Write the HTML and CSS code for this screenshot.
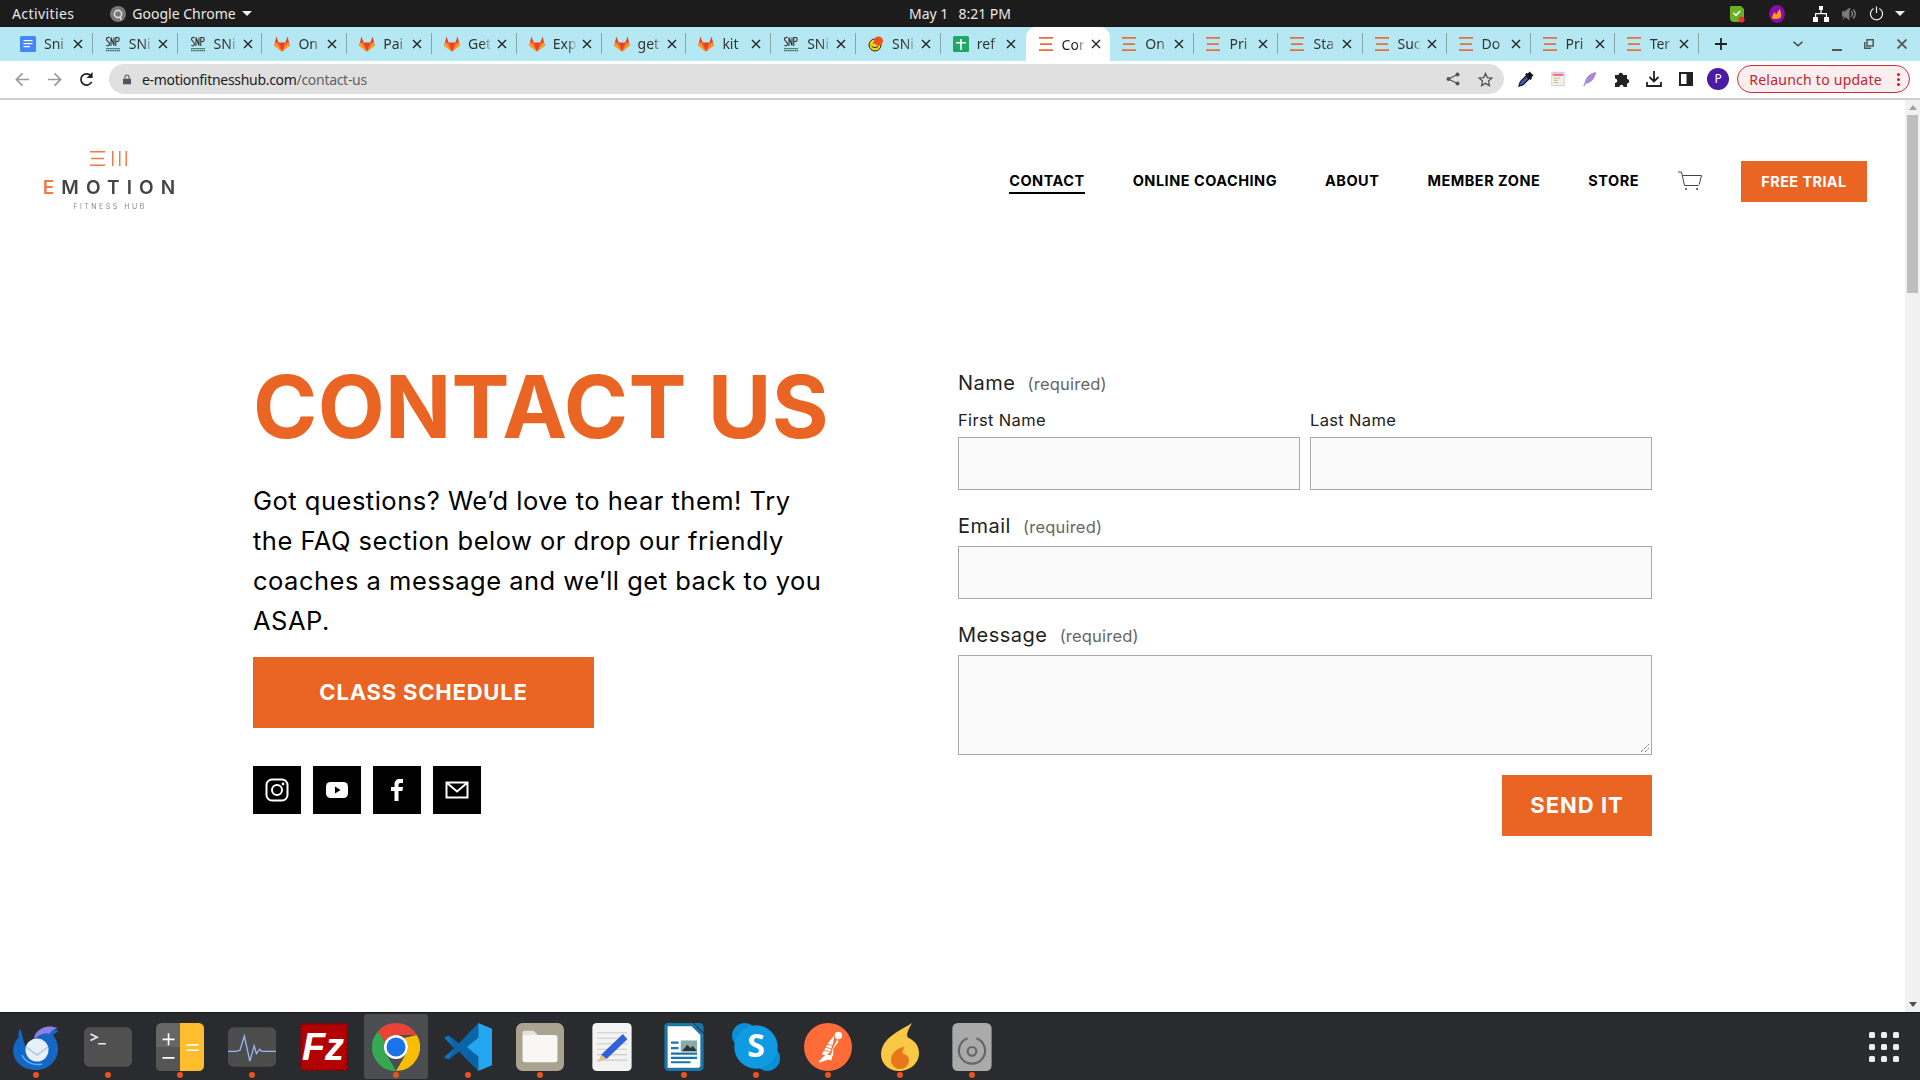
FILE: index.html
```html
<!DOCTYPE html>
<html lang="en">
<head>
<meta charset="utf-8">
<title>Contact Us</title>
<link rel="stylesheet" href="styles.css">
</head>
<body>
<svg class="defs" width="0" height="0">
  <symbol id="gl" viewBox="1 1 14 14.500"><path fill="#e24329" d="M8 15 1 9.600 2.900 1.500 5 7h6l2.100-5.500L15 9.600z"/><path fill="#fc6d26" d="M8 15 5 7H2.200L1 9.600zM8 15l3-8h2.800L15 9.600z"/><path fill="#fca326" d="M8 15 2.200 7 1 9.600zM8 15l5.800-8L15 9.600z"/></symbol>
  <symbol id="snp" viewBox="0 0 16 16"><path fill="none" stroke="#333" stroke-width="1.100" d="M4.600 1.500C2.500 1 1.500 2 1.500 3.200c0 2 3 2.500 3 4.800 0 1.500-1.500 2-3.200 1.500M6 10V1.500l3 8V1.500M10.800 10V1.500h2c1.800 0 1.800 4-.2 4h-1.800"/><path stroke="#3a8f85" stroke-width="1" d="M1 12.500h14"/><path stroke="#555" stroke-width="1.400" stroke-dasharray="1.500 .6" d="M1 14.500h14"/></symbol>
  <symbol id="bars" viewBox="0 0 16 16"><path fill="#ea6e3c" d="M1 1h14v1.800H1zM2 7.200h12V9H2zM1 13.300h14v1.800H1z"/></symbol>
  <symbol id="close" viewBox="0 0 10 10"><path stroke="#222" stroke-width="1.400" d="m1 1 8 8M9 1 1 9"/></symbol>
  <symbol id="docs" viewBox="0 0 16 16"><rect x="0" y="0" width="16" height="16" rx="1.500" fill="#4285f4"/><path fill="#fff" d="M3.500 4h9v1.300h-9zM3.500 7h9v1.300h-9zM3.500 10h6.500v1.300H3.500z"/></symbol>
  <symbol id="sheet" viewBox="0 0 16 16"><rect width="16" height="16" rx="1.500" fill="#23a566"/><path fill="#fff" d="M7.200 3h1.600v3H13v1.500H8.800V14H7.200V7.500H3V6h4.200z"/></symbol>
  <symbol id="smiley" viewBox="0 0 16 16"><circle cx="7" cy="9" r="6" fill="#f4d21f" stroke="#222" stroke-width="1"/><path fill="none" stroke="#222" d="M3.500 10c2 2 5 2 7 0M5 7.500l2-1.500"/><circle cx="10.500" cy="5" r="4.500" fill="#f2511b"/></symbol>
</svg>

<header class="topbar">
  <div class="tb-left">
    <span class="tb-text">Activities</span>
    <span class="tb-app">
      <svg class="i16" viewBox="0 0 16 16"><circle cx="8" cy="8" r="8" fill="#777"/><circle cx="8" cy="8" r="3.600" fill="none" stroke="#ddd" stroke-width="1.600"/><path stroke="#ddd" stroke-width="1.500" d="m10 11 1.500 3"/></svg>
      Google Chrome
      <i class="caret"></i>
    </span>
  </div>
  <div class="tb-clock"><span>May 1</span><span>8:21 PM</span></div>
  <div class="tb-right">
    <svg class="tray-green" viewBox="0 0 16 18"><path fill="#6ab023" d="M2 1h10l3 3v9c0 3-3 4-5 4H5c-2 0-4-1-4-4V2z"/><path fill="none" stroke="#fff" stroke-width="1.500" d="m4.500 8 2.500 2.500L11 6"/><circle cx="12.500" cy="14.500" r="3" fill="#e33"/></svg>
    <svg class="tray-purple" viewBox="0 0 16 18"><ellipse cx="8" cy="9" rx="8" ry="9" fill="#8a0ea5"/><path fill="#ff9a26" d="M3 13c0-3 2-3 2-6 1 1 2 1 2 3 1-2 2-4 4-6 0 3 2 5 1 8-1 2-8 3-9 1z"/></svg>
    <svg class="tray-net" viewBox="0 0 16 16"><path fill="#fff" d="M6 0h4v4H6zM0 11h5v5H0zM11 11h5v5h-5zM7.400 4h1.200v3H14v4h-1.200V8.200H3.200V11H2V7h5.400z"/></svg>
    <svg class="tray-vol" viewBox="0 0 16 16"><path fill="#777" d="M0 5h3l5-4v14l-5-4H0z"/><path fill="none" stroke="#999" stroke-width="1.200" d="M10 5c1.500 2 1.500 4 0 6M12 3c2.500 3 2.500 7 0 10"/><path stroke="#888" d="M1 14 9 2"/></svg>
    <svg class="tray-pow" viewBox="0 0 16 16"><path fill="none" stroke="#eee" stroke-width="1.300" d="M5 2.600a6.500 6.500 0 1 0 6 0M8 .5v7"/></svg>
    <i class="caret"></i>
  </div>
</header>

<nav class="tabstrip">
  <div class="tabs">
    <div class="tab"><svg class="fav"><use href="#docs"/></svg><span class="t">Sni</span><svg class="x"><use href="#close"/></svg></div>
    <div class="tab"><svg class="fav"><use href="#snp"/></svg><span class="t">SNi</span><svg class="x"><use href="#close"/></svg></div>
    <div class="tab"><svg class="fav"><use href="#snp"/></svg><span class="t">SNi</span><svg class="x"><use href="#close"/></svg></div>
    <div class="tab"><svg class="fav"><use href="#gl"/></svg><span class="t">On</span><svg class="x"><use href="#close"/></svg></div>
    <div class="tab"><svg class="fav"><use href="#gl"/></svg><span class="t">Pai</span><svg class="x"><use href="#close"/></svg></div>
    <div class="tab"><svg class="fav"><use href="#gl"/></svg><span class="t">Get</span><svg class="x"><use href="#close"/></svg></div>
    <div class="tab"><svg class="fav"><use href="#gl"/></svg><span class="t">Exp</span><svg class="x"><use href="#close"/></svg></div>
    <div class="tab"><svg class="fav"><use href="#gl"/></svg><span class="t">get</span><svg class="x"><use href="#close"/></svg></div>
    <div class="tab"><svg class="fav"><use href="#gl"/></svg><span class="t">kit</span><svg class="x"><use href="#close"/></svg></div>
    <div class="tab"><svg class="fav"><use href="#snp"/></svg><span class="t">SNi</span><svg class="x"><use href="#close"/></svg></div>
    <div class="tab"><svg class="fav"><use href="#smiley"/></svg><span class="t">SNi</span><svg class="x"><use href="#close"/></svg></div>
    <div class="tab before-active"><svg class="fav"><use href="#sheet"/></svg><span class="t">ref</span><svg class="x"><use href="#close"/></svg></div>
    <div class="tab active"><svg class="fav"><use href="#bars"/></svg><span class="t">Cor</span><svg class="x"><use href="#close"/></svg></div>
    <div class="tab"><svg class="fav"><use href="#bars"/></svg><span class="t">On</span><svg class="x"><use href="#close"/></svg></div>
    <div class="tab"><svg class="fav"><use href="#bars"/></svg><span class="t">Pri</span><svg class="x"><use href="#close"/></svg></div>
    <div class="tab"><svg class="fav"><use href="#bars"/></svg><span class="t">Sta</span><svg class="x"><use href="#close"/></svg></div>
    <div class="tab"><svg class="fav"><use href="#bars"/></svg><span class="t">Suc</span><svg class="x"><use href="#close"/></svg></div>
    <div class="tab"><svg class="fav"><use href="#bars"/></svg><span class="t">Do</span><svg class="x"><use href="#close"/></svg></div>
    <div class="tab"><svg class="fav"><use href="#bars"/></svg><span class="t">Pri</span><svg class="x"><use href="#close"/></svg></div>
    <div class="tab"><svg class="fav"><use href="#bars"/></svg><span class="t">Ter</span><svg class="x"><use href="#close"/></svg></div>
  </div>
  <svg class="newtab" viewBox="0 0 12 12"><path fill="#222" d="M5.100 0h1.800v5.100H12v1.800H6.900V12H5.100V6.900H0V5.100h5.100z"/></svg>
  <div class="winctl">
    <svg class="chev" viewBox="0 0 10 6"><path fill="none" stroke="#444" stroke-width="1.500" d="m.5.800 4.500 4 4.500-4"/></svg>
    <svg class="wmin" viewBox="0 0 10 10"><path fill="#555" d="M0 8h10v2H0z"/></svg>
    <svg class="wres" viewBox="0 0 10 10"><path fill="none" stroke="#555" stroke-width="1.500" d="M3 .8h6.200V7H3zM.8 3v6.200H7"/></svg>
    <svg class="wcls" viewBox="0 0 10 10"><path stroke="#555" stroke-width="1.800" d="m.5.500 9 9M9.500.500l-9 9"/></svg>
  </div>
</nav>

<div class="toolbar">
  <svg class="nav-a" viewBox="0 0 16 16"><path fill="none" stroke="#9a9a9a" stroke-width="1.800" d="M15 8H2m6-6.500L1.500 8 8 14.500"/></svg>
  <svg class="nav-b" viewBox="0 0 16 16"><path fill="none" stroke="#9a9a9a" stroke-width="1.800" d="M1 8h13M8 1.500 14.500 8 8 14.500"/></svg>
  <svg class="nav-c" viewBox="0 0 16 16"><path fill="none" stroke="#222" stroke-width="1.800" d="M13.500 10.500A6 6 0 1 1 13 4.500"/><path fill="#222" d="M14.500 0v6.500H8z"/></svg>
  <div class="omnibox">
    <svg class="lock" viewBox="0 0 10 12"><path fill="#555" d="M0 5h10v7H0z"/><path fill="none" stroke="#555" stroke-width="1.300" d="M2.500 5V3a2.500 2.500 0 0 1 5 0v2"/></svg>
    <span class="url">e-motionfitnesshub.com<span class="url-path">/contact-us</span></span>
    <svg class="share" viewBox="0 0 14 14"><circle cx="11.500" cy="2.500" r="2" fill="#555"/><circle cx="2.500" cy="7" r="2" fill="#555"/><circle cx="11.500" cy="11.500" r="2" fill="#555"/><path stroke="#555" stroke-width="1.200" fill="none" d="M11.500 2.500 2.500 7l9 4.500"/></svg>
    <svg class="star" viewBox="0 0 16 16"><path fill="none" stroke="#555" stroke-width="1.400" d="m8 1.500 2 4.500 4.800.5-3.600 3.200 1 4.800L8 12.100 3.800 14.500l1-4.800L1.200 6.500 6 6z"/></svg>
  </div>
  <div class="ext">
    <svg viewBox="0 0 18 18"><path fill="#111" d="m11 3 2-2.500 4.500 4.500L15 7l1 1-2 2-6-6 2-2z"/><path fill="#3b55b5" stroke="#111" stroke-width="1.200" d="M9 5.500 2.500 12 1 17l5-1.500L12.500 9z"/></svg>
    <svg viewBox="0 0 18 18"><rect x="2" y="1.500" width="14" height="15" fill="#f3f1ea" stroke="#ccc"/><path fill="#f27" d="M3 3h12v2.500H3z" opacity=".7"/><path stroke="#9c6" d="M4.500 8h7M4.500 10.500h4"/><path stroke="#e9a" d="M4.500 13h5"/></svg>
    <svg viewBox="0 0 18 18"><path fill="#a88bd4" d="M16 1C9 2 4 7 3 13l-1.500 4 1 .5L4 14.500C11 13 15 8 16 1z"/></svg>
    <svg viewBox="0 0 16 16"><path fill="#222" d="M1 4h3.500C4.500 1 9 1 9 4h4v4c3 0 3 4.500 0 4.500V16H9.500c0-3-4-3-4 0H1v-4c3 0 3-4.500 0-4.500z"/></svg>
    <svg viewBox="0 0 16 16"><path fill="none" stroke="#222" stroke-width="1.800" d="M8 0v10M3.500 6 8 10.500 12.500 6M1 11v4h14v-4"/></svg>
    <svg viewBox="0 0 16 16"><path fill="#222" d="M1 1h14v14H1z"/><path fill="#fff" d="M3 3h5.500v10H3z"/></svg>
    <span class="avatar">P</span>
  </div>
  <div class="relaunch"><span>Relaunch to update</span><i class="dots"></i></div>
</div>

<div class="viewport">
  <main class="page">
    <div class="site-head">
      <div class="logo">
        <svg class="logo-mark" viewBox="0 0 37 15"><path fill="#ef7b47" d="M0 0h15v1.500H0zM1 6.800h13v1.500H1zM0 13.500h15V15H0zM22 0h1.500v15H22zM29 0h1.500v15H29zM35.500 0H37v15h-1.500z"/></svg>
        <div class="logo-name"><b>E</b>MOTION</div>
        <div class="logo-sub">FITNESS HUB</div>
      </div>
      <div class="site-nav">
        <a class="link current">CONTACT</a>
        <a class="link">ONLINE COACHING</a>
        <a class="link">ABOUT</a>
        <a class="link">MEMBER ZONE</a>
        <a class="link">STORE</a>
        <svg class="cart" viewBox="0 0 26 20"><path fill="none" stroke="#444" d="M1 1h3.500l3 13.500h14M5.500 4.500h19l-2.300 9"/><circle cx="9" cy="18" r="1" fill="#444"/><circle cx="20" cy="18" r="1" fill="#444"/></svg>
        <a class="btn-trial">FREE TRIAL</a>
      </div>
    </div>
    <div class="content">
      <section class="intro">
        <h1>CONTACT US</h1>
        <p>Got questions? We’d love to hear them! Try the FAQ section below or drop our friendly coaches a message and we’ll get back to you ASAP.</p>
        <a class="btn-schedule">CLASS SCHEDULE</a>
        <div class="socials">
          <a class="social"><svg viewBox="0 0 24 24"><rect x="1.500" y="1.500" width="21" height="21" rx="5.500" fill="none" stroke="#fff" stroke-width="2"/><circle cx="12" cy="12" r="5" fill="none" stroke="#fff" stroke-width="2"/><circle cx="18" cy="6" r="1.400" fill="#fff"/></svg></a>
          <a class="social"><svg viewBox="0 0 24 24"><rect x="1" y="4" width="22" height="16" rx="4.500" fill="#fff"/><path d="m10 8.500 5.500 3.500-5.500 3.500z" fill="#000"/></svg></a>
          <a class="social"><svg viewBox="0 0 24 24"><path fill="#fff" d="M9.500 23V13H6V9h3.500V6.500C9.500 3 11.500 1 14.500 1H18v4h-2.500c-1.300 0-2 .7-2 2v2H18l-.6 4h-3.900v10z"/></svg></a>
          <a class="social"><svg viewBox="0 0 24 24"><path fill="none" stroke="#fff" stroke-width="2" d="M1.500 4.500h21v15h-21zM2 5l10 8.500L22 5"/></svg></a>
        </div>
      </section>
      <form class="contact-form">
        <div class="legend">Name <small>(required)</small></div>
        <div class="name-row">
          <label class="sub">First Name<span class="input"></span></label>
          <label class="sub">Last Name<span class="input"></span></label>
        </div>
        <div class="legend">Email <small>(required)</small></div>
        <span class="input"></span>
        <div class="legend">Message <small>(required)</small></div>
        <span class="input area">
          <svg class="grip" viewBox="0 0 8 8"><path stroke="#444" stroke-dasharray="1 1" d="M0 8 8 0M4 8l4-4"/></svg>
        </span>
        <div class="send-row"><a class="btn-send">SEND IT</a></div>
      </form>
    </div>
  </main>
  <aside class="scrollbar">
    <i class="arrow up"></i>
    <i class="thumb"></i>
    <i class="arrow down"></i>
  </aside>
</div>

<footer class="dock">
  <div class="slot run"><svg class="ico" viewBox="0 0 48 48"><path fill="#1467c4" d="M8 6c-2 3-2 6-1 8-5 5-7 12-5 19 3 9 12 14 22 14 12 0 22-9 22-21 0-6-2-10-5-14 2-2 4-3 6-4-7-3-14-3-19 0-3 2-5 5-5 8-5 1-8 4-9 8-3-5-3-12-6-18z"/><path fill="#8d7ee8" d="M22 16c0-6 6-11 12-12 4-1 8 0 12 1-4 1-7 3-9 6-3-2-9 0-15 5z"/><circle cx="25" cy="27" r="11.500" fill="#e6f0fa"/><path fill="none" stroke="#a9c7e6" stroke-width="1.500" d="m14 24 11 8 11-8"/><path fill="none" stroke="#5db0f2" stroke-width="1.500" d="M10 32c3 7 12 11 20 9"/></svg></div>
  <div class="slot run"><svg class="ico" viewBox="0 0 44 36"><rect width="44" height="36" rx="5" fill="#505050"/><path fill="none" stroke="#eee" stroke-width="1.500" d="m6 6 6 3-6 3M13 15h7"/></svg></div>
  <div class="slot run"><svg class="ico" viewBox="0 0 44 44"><rect width="44" height="44" rx="5" fill="#666"/><path fill="#555" d="M0 22h22v22H5a5 5 0 0 1-5-5z"/><path fill="#fdbd2c" d="M22 0h17a5 5 0 0 1 5 5v34a5 5 0 0 1-5 5H22z"/><path stroke="#fff" stroke-width="1.500" d="M6 15h11M11.500 9.500v11M6 32h11M28 20h11M28 25h11"/></svg></div>
  <div class="slot run"><svg class="ico" viewBox="0 0 44 36"><rect width="44" height="36" rx="5" fill="#4c4c4c"/><path fill="none" stroke="#9ab8f0" stroke-width="1.200" d="M0 22h7l4-1 4-13 5 23 4-14 2 7 3-4 2 2h13"/></svg></div>
  <div class="slot"><svg class="ico" viewBox="0 0 48 48"><rect x="1" y="1" width="46" height="46" fill="#b30000" stroke="#8a0000" stroke-width="2" stroke-dasharray="3 2"/><text class="fz" x="23" y="37" text-anchor="middle">Fz</text></svg></div>
  <div class="slot run on"><svg class="ico" viewBox="0 0 48 48"><path fill="#ea4335" d="M24 0a24 24 0 0 1 20.800 12H24a12 12 0 0 0-11 7L5.800 8.400A24 24 0 0 1 24 0z"/><path fill="#34a853" d="M3.200 12 14 31l10 17A24 24 0 0 1 3.200 12z"/><path fill="#fbbc04" d="M44.800 12A24 24 0 0 1 24 48l10.500-18A12 12 0 0 0 32 15z"/><path fill="#34a853" d="M5.800 8.400 13 19c-2 6 1 11 1 12L24 48A24 24 0 0 1 5.800 8.400z"/><circle cx="24" cy="24" r="12" fill="#fff"/><circle cx="24" cy="24" r="9.500" fill="#1a73e8"/></svg></div>
  <div class="slot run"><svg class="ico" viewBox="0 0 42 42"><path fill="#0e75bd" d="M0 13 4 11l9 7-4 4zM9 22l4 3-9 7-4-2z"/><path fill="#0a64a8" d="M30 0 13 18l-9-7 5 11-5 10 9-7 17 17z"/><path fill="#22a6f0" d="M30 0l12 5v32l-12 5V29l-10-8 10-8z"/></svg></div>
  <div class="slot run"><svg class="ico" viewBox="0 0 44 44"><rect width="44" height="44" rx="6" fill="#a9a390"/><path fill="#e6e3dc" d="M6 13V9a2 2 0 0 1 2-2h8l4 4z"/><rect x="6" y="11" width="32" height="25" rx="2" fill="#f8f7f4"/></svg></div>
  <div class="slot"><svg class="ico" viewBox="0 0 36 44"><rect width="36" height="44" rx="4" fill="#f3f3f3"/><path stroke="#ccc" d="M4 9h28M4 14h28M4 19h28M4 24h28M4 29h28M4 34h28"/><path fill="#2f62d8" d="M28 10l4 5L13 33l-5-4z"/><path fill="#e3c38a" d="m8 29 5 4-8 3z"/></svg></div>
  <div class="slot run"><svg class="ico" viewBox="0 0 36 44"><path fill="#1a75a8" d="M2 0h24l10 10v30a4 4 0 0 1-4 4H4a4 4 0 0 1-4-4V2z"/><path fill="#fff" d="M3 3h22l8 8v28a2 2 0 0 1-2 2H3z"/><path fill="#1a75a8" d="M6 17h7v2H6zM6 22h7v2H6zM6 27h24v2H6zM6 31h24v2H6zM6 35h18v2H6z"/><rect x="15" y="16" width="15" height="10" fill="#8aa"/><path fill="#333" d="m16 26 5-6 3 3 2-2 4 5z"/><path fill="#1a75a8" d="M27 0h5a4 4 0 0 1 4 4v5z"/></svg></div>
  <div class="slot run"><svg class="ico" viewBox="0 0 42 42"><circle cx="11" cy="11" r="11" fill="#0a8ed6"/><circle cx="31" cy="31" r="11" fill="#0a8ed6"/><circle cx="21" cy="21" r="19" fill="#0f9ae2"/><text class="skype-s" x="21" y="30" text-anchor="middle">S</text></svg></div>
  <div class="slot run"><svg class="ico" viewBox="0 0 46 46"><circle cx="23" cy="23" r="23" fill="#ff6c37"/><circle cx="33" cy="12" r="3.500" fill="#fff"/><path fill="#fff" d="M30 11l3 3-5 9-2 7-1 1-4-1-7 7 1 1 8-3 3 1 1-4 1-1 0-6 5-7-2-4z"/><path fill="#fff" d="M24 18l5-6-1 7-3 9-4 3-4-1 3-5z"/><path stroke="#ff6c37" stroke-width=".8" d="M21 20l8 2M20 23l7 2M19 26l7 2"/></svg></div>
  <div class="slot run"><svg class="ico" viewBox="0 0 40 48"><path fill="#f9c844" d="M32 0C20 8 2 14 1 31c0 10 8 17 18 17s20-7 20-18c0-7-4-12-10-15-2-1-4-3 3-15z"/><path fill="#e8771c" d="M25 24c-7 0-14 6-14 13 0 5 4 9 9 9s9-4 9-9c0-3-2-5-5-6-2-1-2-4 1-7z"/></svg></div>
  <div class="slot run"><svg class="ico" viewBox="0 0 36 44"><rect width="36" height="44" rx="5" fill="#aaa"/><circle cx="18" cy="26" r="4" fill="none" stroke="#666" stroke-width="2"/><path fill="none" stroke="#666" stroke-width="2" d="M22 14a12 12 0 1 1-8 0"/></svg></div>
  <div class="apps">
    <i></i><i></i><i></i><i></i><i></i><i></i><i></i><i></i><i></i>
  </div>
</footer>
</body>
</html>
```

FILE: styles.css
```css
* { box-sizing: border-box; }
html, body { margin: 0; height: 100%; }
body {
  width: 1920px;
  height: 1080px;
  display: flex;
  flex-direction: column;
  overflow: hidden;
  font-family: "Noto Sans", sans-serif;
  background: #fff;
}
.defs { position: absolute; }
a { display: block; }

/* desktop top bar */
.topbar {
  height: 27px;
  background: #1c1c1c;
  color: #e9e9e9;
  font-size: 14px;
  display: grid;
  grid-template-columns: 1fr auto 1fr;
  align-items: center;
  padding: 0 12px;
}
.tb-left { display: flex; align-items: center; gap: 36px; }
.tb-text { letter-spacing: .4px; }
.tb-app { display: flex; align-items: center; gap: 6px; }
.i16 { width: 16px; height: 16px; }
.caret { width: 0; height: 0; border: 5px solid transparent; border-top: 5px solid #eee; border-bottom: 0; display: block; }
.tb-clock { display: flex; gap: 10px; }
.tb-right { display: flex; justify-content: flex-end; align-items: center; padding-right: 3px; }
.tb-right .caret { margin-left: 11px; }
.tray-green { width: 16px; height: 18px; }
.tray-purple { width: 16px; height: 18px; margin-left: 24px; }
.tray-net { width: 16px; height: 16px; margin-left: 28px; }
.tray-vol { width: 15px; height: 16px; margin-left: 13px; }
.tray-pow { width: 15px; height: 15px; margin-left: 12px; }

/* tab strip */
.tabstrip {
  height: 34px;
  background: #b5e8f2;
  display: flex;
  align-items: stretch;
  padding-left: 8px;
}
.tabs { display: grid; grid-template-columns: repeat(13, 84.8px) repeat(7, 84.05px); }
.tab {
  display: flex;
  align-items: center;
  padding-left: 12px;
  border-right: 1px solid #86a4ab;
  margin: 6px 0 7px;
  font-size: 14px;
  color: #333;
}
.tab.before-active { border-right-color: transparent; }
.tab.active {
  margin: 0;
  background: #fff;
  border-right: 0;
  border-radius: 10px 10px 0 0;
  color: #222;
}
.tab.active ~ .tab { padding-left: 11px; }
.fav { width: 16px; height: 16px; flex: none; }
.t {
  width: 24px;
  margin-left: 8px;
  overflow: hidden;
  white-space: nowrap;
  -webkit-mask-image: linear-gradient(90deg, #000 60%, transparent);
  mask-image: linear-gradient(90deg, #000 60%, transparent);
}
.x { width: 10px; height: 10px; margin-left: 5px; flex: none; }
.newtab { width: 12px; height: 12px; margin: 11px 0 0 16px; }
.winctl { flex: 1; display: flex; align-items: center; padding-left: 66px; }
.chev { width: 10px; height: 6px; }
.wmin { width: 10px; height: 10px; margin-left: 29px; margin-top: 3px; }
.wres { width: 10px; height: 10px; margin-left: 22px; }
.wcls { width: 10px; height: 10px; margin-left: 23px; }

/* toolbar */
.toolbar {
  height: 39px;
  background: #fff;
  border-bottom: 2px solid #cfcfcf;
  display: flex;
  align-items: center;
  padding: 0 10px 1px 15px;
}
.nav-a, .nav-b, .nav-c { width: 15px; height: 15px; flex: none; }
.nav-b, .nav-c { margin-left: 17px; }
.omnibox {
  width: 1397px;
  height: 30px;
  margin-left: 15px;
  background: #e0e0e0;
  border-radius: 15px;
  display: flex;
  align-items: center;
  padding: 0 11px 0 14px;
  font-size: 14px;
}
.lock { width: 8px; height: 11px; flex: none; }
.url { margin-left: 11px; color: #202124; flex: 1; letter-spacing: -.3px; }
.url-path { color: #5f6368; }
.share { width: 14px; height: 14px; margin-right: 18px; }
.star { width: 15px; height: 15px; }
.ext { display: grid; grid-template-columns: repeat(7, 32px); justify-items: center; align-items: center; margin-left: 6px; }
.ext svg { width: 16px; height: 16px; }
.avatar {
  width: 22px; height: 22px;
  border-radius: 50%;
  background: #4b1ba6;
  color: #fff;
  font-size: 12px;
  text-align: center;
  line-height: 22px;
}
.relaunch {
  width: 173px;
  height: 28px;
  margin-left: 3px;
  border: 1px solid #c9303e;
  border-radius: 14px;
  background: #fbeeee;
  color: #c5222f;
  font-size: 14px;
  letter-spacing: .25px;
  display: flex;
  align-items: center;
  justify-content: space-between;
  padding: 0 9px 0 11px;
}
.dots { width: 3px; height: 3px; border-radius: 50%; background: #c5222f; box-shadow: 0 -5px 0 #c5222f, 0 5px 0 #c5222f; display: block; }

/* page */
.viewport { flex: 1; display: flex; min-height: 0; }
.page {
  flex: 1;
  background: #fff;
  font-family: Inter, sans-serif;
  color: #000;
}
.site-head {
  height: 162px;
  padding: 0 38px 0 43px;
  display: flex;
  align-items: center;
  justify-content: space-between;
}
.logo { width: 134px; filter: blur(.4px); display: flex; flex-direction: column; align-items: center; padding-bottom: 1px; }
.logo-mark { width: 37px; height: 15px; margin-right: 3px; }
.logo-name { font-size: 19px; line-height: 20px; letter-spacing: 7.100px; color: #444; margin: 12px -5px 0 0; font-weight: 600; white-space: nowrap; }
.logo-name b { color: #ef7b47; font-weight: 600; }
.logo-sub { font-size: 7px; line-height: 8px; letter-spacing: 2.500px; color: #888; margin: 5px 0 0; white-space: nowrap; }
.site-nav { display: flex; align-items: center; gap: 48px; }
.link { font-size: 14.500px; font-weight: 700; letter-spacing: .5px; line-height: 20px; position: relative; white-space: nowrap; }
.link.current::after { content: ""; position: absolute; left: 0; right: 0; top: 21px; height: 2px; background: #000; }
.cart { width: 26px; height: 20px; margin: 0 0 0 -10px; }
.btn-trial {
  width: 126px;
  height: 41px;
  margin-left: -10px;
  background: #ea6424;
  color: #fff;
  font-size: 14.500px;
  font-weight: 700;
  letter-spacing: .4px;
  text-align: center;
  line-height: 41px;
}
.content {
  display: grid;
  grid-template-columns: 577px 694px;
  column-gap: 128px;
  padding: 0 0 0 253px;
}
.intro { padding-top: 90px; }
h1 {
  margin: 0;
  font-size: 87px;
  line-height: 110px;
  font-weight: 700;
  letter-spacing: .3px;
  color: #ea6424;
  white-space: nowrap;
}
.intro p {
  margin: 19px 0 0;
  width: 575px;
  font-size: 25.500px;
  line-height: 40px;
  font-weight: 400;
  letter-spacing: .5px;
}
.btn-schedule {
  width: 341px;
  height: 71px;
  margin-top: 16px;
  background: #ea6424;
  color: #fff;
  font-size: 22px;
  font-weight: 700;
  letter-spacing: .8px;
  text-align: center;
  line-height: 71px;
}
.socials { display: flex; gap: 12px; margin-top: 38px; }
.social { width: 48px; height: 48px; background: #000; display: flex; align-items: center; justify-content: center; }
.social svg { width: 24px; height: 24px; }
.contact-form { padding-top: 106px; display: flex; flex-direction: column; }
.legend { font-size: 20px; line-height: 30px; letter-spacing: .5px; color: #222; margin-bottom: 4px; }
.legend small { font-size: 16.500px; letter-spacing: .2px; color: #666; margin-left: 6px; }
.name-row { display: grid; grid-template-columns: 1fr 1fr; gap: 10px; margin-bottom: 21px; }
.sub { font-size: 16.500px; line-height: 20px; letter-spacing: .35px; color: #222; display: block; margin-top: 7px; }
.input { display: block; height: 53px; background: #fafafa; border: 1px solid #a9a9a9; margin-bottom: 21px; }
.sub .input { margin: 7px 0 0; }
.input.area { height: 100px; position: relative; margin-bottom: 20px; }
.grip { position: absolute; right: 2px; bottom: 2px; width: 8px; height: 8px; }
.send-row { display: flex; justify-content: flex-end; }
.btn-send {
  width: 150px;
  height: 61px;
  background: #ea6424;
  color: #fff;
  font-size: 22px;
  font-weight: 700;
  letter-spacing: 1px;
  text-align: center;
  line-height: 61px;
}

/* scrollbar */
.scrollbar { width: 15px; background: #f1f1f1; display: flex; flex-direction: column; align-items: center; padding-top: 5px; }
.arrow { width: 0; height: 0; border: 4px solid transparent; display: block; }
.arrow.up { border-bottom: 5px solid #a3a3a3; border-top: 0; }
.arrow.down { border-top: 5px solid #505050; border-bottom: 0; margin-top: auto; margin-bottom: 5px; }
.thumb { width: 11px; height: 178px; background: #bebebe; margin-top: 5px; display: block; }

/* dock */
.dock {
  height: 68px;
  background: #2a2b2e;
  border-top: 1px solid #1b1b1b;
  display: flex;
}
.slot { width: 72px; height: 67px; display: flex; align-items: center; justify-content: center; position: relative; }
.ico { height: 48px; width: 48px; }
.slot.on::before { content: ""; position: absolute; left: 4px; right: 4px; top: 1px; bottom: 1px; background: #4c4d50; border-radius: 3px; }
.slot.on .ico { position: relative; }
.slot.run::after { content: ""; position: absolute; left: 33px; bottom: 2px; width: 6px; height: 6px; border-radius: 50%; background: #e95420; }
.skype-s { font-family: "Open Sans", sans-serif; font-size: 28px; font-weight: 700; fill: #fff; }
.fz { font-family: "Liberation Sans", sans-serif; font-size: 38px; font-weight: 700; font-style: italic; fill: #fff; }
.apps {
  margin-left: auto;
  margin-right: 21px;
  align-self: center;
  display: grid;
  grid-template-columns: repeat(3, 6px);
  gap: 6px;
}
.apps i { width: 6px; height: 6px; background: #eee; border-radius: 1.500px; display: block; }
```
